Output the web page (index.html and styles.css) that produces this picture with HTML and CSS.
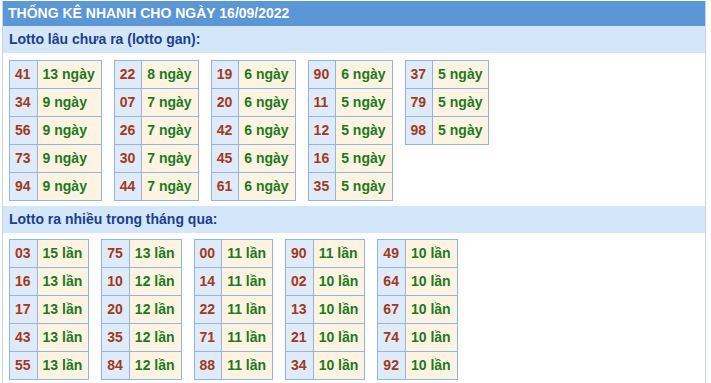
FILE: index.html
```html
<!DOCTYPE html>
<html lang="vi">
<head>
<meta charset="utf-8">
<title>Thống kê nhanh</title>
<link rel="stylesheet" href="styles.css">
</head>
<body>
<div class="box">
  <div class="title">THỐNG KÊ NHANH CHO NGÀY 16/09/2022</div>
  <div class="sub">Lotto lâu chưa ra (lotto gan):</div>
  <div class="tables gan">
    <table><tr><td class="n">41</td><td class="v">13 ngày</td></tr><tr><td class="n">34</td><td class="v">9 ngày</td></tr><tr><td class="n">56</td><td class="v">9 ngày</td></tr><tr><td class="n">73</td><td class="v">9 ngày</td></tr><tr><td class="n">94</td><td class="v">9 ngày</td></tr></table>
    <table><tr><td class="n">22</td><td class="v">8 ngày</td></tr><tr><td class="n">07</td><td class="v">7 ngày</td></tr><tr><td class="n">26</td><td class="v">7 ngày</td></tr><tr><td class="n">30</td><td class="v">7 ngày</td></tr><tr><td class="n">44</td><td class="v">7 ngày</td></tr></table>
    <table><tr><td class="n">19</td><td class="v">6 ngày</td></tr><tr><td class="n">20</td><td class="v">6 ngày</td></tr><tr><td class="n">42</td><td class="v">6 ngày</td></tr><tr><td class="n">45</td><td class="v">6 ngày</td></tr><tr><td class="n">61</td><td class="v">6 ngày</td></tr></table>
    <table><tr><td class="n">90</td><td class="v">6 ngày</td></tr><tr><td class="n">11</td><td class="v">5 ngày</td></tr><tr><td class="n">12</td><td class="v">5 ngày</td></tr><tr><td class="n">16</td><td class="v">5 ngày</td></tr><tr><td class="n">35</td><td class="v">5 ngày</td></tr></table>
    <table><tr><td class="n">37</td><td class="v">5 ngày</td></tr><tr><td class="n">79</td><td class="v">5 ngày</td></tr><tr><td class="n">98</td><td class="v">5 ngày</td></tr></table>
  </div>
  <div class="sub">Lotto ra nhiều trong tháng qua:</div>
  <div class="tables nhieu">
    <table><tr><td class="n">03</td><td class="v">15 lần</td></tr><tr><td class="n">16</td><td class="v">13 lần</td></tr><tr><td class="n">17</td><td class="v">13 lần</td></tr><tr><td class="n">43</td><td class="v">13 lần</td></tr><tr><td class="n">55</td><td class="v">13 lần</td></tr></table>
    <table><tr><td class="n">75</td><td class="v">13 lần</td></tr><tr><td class="n">10</td><td class="v">12 lần</td></tr><tr><td class="n">20</td><td class="v">12 lần</td></tr><tr><td class="n">35</td><td class="v">12 lần</td></tr><tr><td class="n">84</td><td class="v">12 lần</td></tr></table>
    <table><tr><td class="n">00</td><td class="v">11 lần</td></tr><tr><td class="n">14</td><td class="v">11 lần</td></tr><tr><td class="n">22</td><td class="v">11 lần</td></tr><tr><td class="n">71</td><td class="v">11 lần</td></tr><tr><td class="n">88</td><td class="v">11 lần</td></tr></table>
    <table><tr><td class="n">90</td><td class="v">11 lần</td></tr><tr><td class="n">02</td><td class="v">10 lần</td></tr><tr><td class="n">13</td><td class="v">10 lần</td></tr><tr><td class="n">21</td><td class="v">10 lần</td></tr><tr><td class="n">34</td><td class="v">10 lần</td></tr></table>
    <table><tr><td class="n">49</td><td class="v">10 lần</td></tr><tr><td class="n">64</td><td class="v">10 lần</td></tr><tr><td class="n">67</td><td class="v">10 lần</td></tr><tr><td class="n">74</td><td class="v">10 lần</td></tr><tr><td class="n">92</td><td class="v">10 lần</td></tr></table>
  </div>
</div>
</body>
</html>
```
FILE: styles.css
```css
html, body {
  margin: 0;
  padding: 0;
  background: #ffffff;
}
body {
  font-family: "Liberation Sans", Arial, sans-serif;
  font-size: 14px;
  font-weight: bold;
}
.box {
  margin: 1px 0 0 2px;
  width: 702px;
  border-left: 1px solid #c9d6e4;
  border-right: 1px solid #c9d6e4;
  padding-bottom: 10px;
}
.title {
  background: #5b96d6;
  color: #ffffff;
  height: 25px;
  line-height: 25px;
  padding-left: 5px;
}
.sub {
  background: #d4e6f9;
  color: #1c3f8f;
  height: 27px;
  line-height: 27px;
  padding-left: 6px;
}
.tables {
  display: flex;
  align-items: flex-start;
  gap: 12px;
  padding: 6px 0 5px 6px;
}
.gan {
  padding-top: 7px;
}
table {
  border-collapse: collapse;
}
td {
  border: 1px solid #94b4e1;
  padding: 0 6px 0 5px;
  height: 27px;
  line-height: 27px;
  white-space: nowrap;
}
td.n {
  background: #dfeafa;
  color: #a3391d;
}
td.v {
  background: #fff3e1;
  color: #1d7a1d;
}
```
